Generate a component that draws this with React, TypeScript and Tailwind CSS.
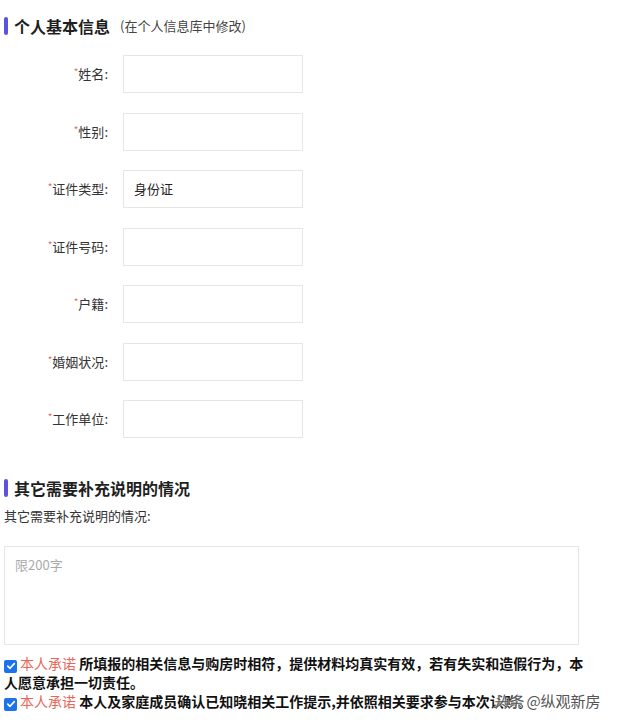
const fields = [
  { label: "姓名", value: "" },
  { label: "性别", value: "" },
  { label: "证件类型", value: "身份证" },
  { label: "证件号码", value: "" },
  { label: "户籍", value: "" },
  { label: "婚姻状况", value: "" },
  { label: "工作单位", value: "" },
];

function SectionTitle({ title, sub }: { title: string; sub?: string }) {
  return (
    <div className="flex items-center h-[20px]">
      <span className="w-[4px] h-[18px] rounded-[2px] bg-[#5b52e0]" />
      <span className="ml-[6px] text-[16px] font-bold text-[#1f1f1f] leading-[20px]">{title}</span>
      {sub && <span className="ml-[10px] text-[13px] text-[#444] leading-[20px]">{sub}</span>}
    </div>
  );
}

function Check() {
  return (
    <span className="inline-flex align-[-2px] w-[13px] h-[13px] rounded-[2px] bg-[#1a73e8] items-center justify-center mr-[3px]">
      <svg width="10" height="10" viewBox="0 0 10 10" fill="none">
        <path d="M1.8 5.2 L4 7.3 L8.3 2.6" stroke="white" strokeWidth="1.7" strokeLinecap="round" strokeLinejoin="round" />
      </svg>
    </span>
  );
}

export default function App() {
  return (
    <div
      className="relative w-[621px] h-[721px] overflow-hidden bg-white pl-[4px] pt-[16px] text-[#333]"
      style={{ fontFamily: '"Noto Sans CJK SC", "Noto Sans", sans-serif' }}
    >
      <SectionTitle title="个人基本信息" sub="(在个人信息库中修改)" />

      <div className="mt-[19px] flex flex-col gap-[19.5px]">
        {fields.map((f) => (
          <div key={f.label} className="flex items-center h-[38px]">
            <div className="w-[104px] text-right text-[13px] text-[#333]">
              <span className="text-[#e26d6d] text-[10px] align-[3px]">*</span>
              {f.label}:
            </div>
            <div className="ml-[15px] w-[180px] h-[38px] border border-[#e6e6e6] flex items-center px-[10px] text-[13px] text-[#222]">
              {f.value}
            </div>
          </div>
        ))}
      </div>

      <div className="mt-[40px]">
        <SectionTitle title="其它需要补充说明的情况" />
      </div>
      <div className="mt-[9px] text-[13px] text-[#333] leading-[18px]">其它需要补充说明的情况:</div>

      <div className="mt-[21px] w-[575px] h-[99px] border border-[#e6e6e6] px-[10px] pt-[8px] text-[13px] text-[#aaa]">
        限200字
      </div>

      <div className="mt-[9px] w-[582px] text-[14px] leading-[19px] font-bold text-[#111]">
        <p>
          <Check />
          <span className="text-[#e8675c] font-normal">本人承诺</span> 所填报的相关信息与购房时相符，提供材料均真实有效，若有失实和造假行为，本人愿意承担一切责任。
        </p>
        <p>
          <Check />
          <span className="text-[#e8675c] font-normal">本人承诺</span> 本人及家庭成员确认已知晓相关工作提示,并依照相关要求参与本次认购。
        </p>
      </div>

      <div
        className="absolute left-[493px] top-[690px] text-[15px] text-[#555] whitespace-nowrap"
        style={{ textShadow: "0 0 2px #fff, 0 0 3px #fff" }}
      >
        <span className="italic">头条</span> @纵观新房
      </div>
    </div>
  );
}
